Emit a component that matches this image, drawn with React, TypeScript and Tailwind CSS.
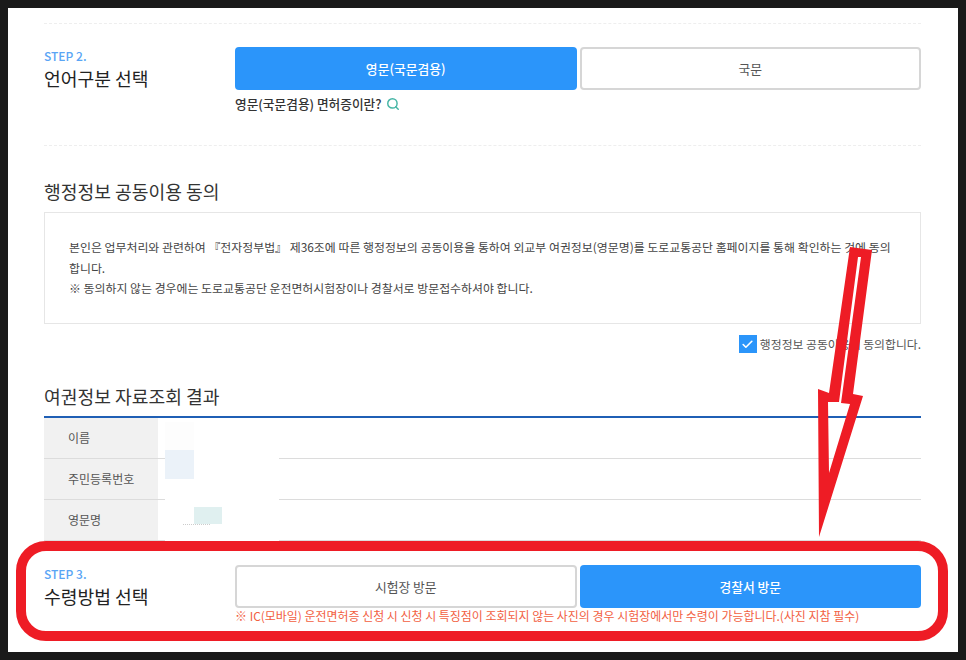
import { Check, Search } from 'lucide-react'

const font = { fontFamily: '"Noto Sans CJK KR", "Noto Sans", sans-serif' }

function StepRow({ step, title, left, right, leftOn }: { step: string; title: string; left: string; right: string; leftOn: boolean }) {
  const on = 'h-[43px] rounded-[4px] bg-[#2b95fa] text-white text-[12.8px] font-medium flex items-center justify-center'
  const off = 'h-[43px] rounded-[4px] border-2 border-[#d6d6d6] bg-white text-[#555] text-[12.8px] flex items-center justify-center'
  return (
    <div className="flex">
      <div className="w-[191px] pt-[2px]">
        <div className="text-[12px] leading-[14px] font-medium text-[#5aa5f5]">{step}</div>
        <div className="mt-[3px] text-[18.2px] leading-[24px] text-[#222]">{title}</div>
      </div>
      <div className="grid flex-1 grid-cols-2 gap-[3px]">
        <div className={leftOn ? on : off}>{left}</div>
        <div className={leftOn ? off : on}>{right}</div>
      </div>
    </div>
  )
}

function InfoRow({ label }: { label: string }) {
  return (
    <div className="flex h-[41px] border-b border-[#dcdcdc]">
      <div className="w-[114px] bg-[#f1f1f1] pl-[24px] flex items-center text-[12px] text-[#555]">{label}</div>
    </div>
  )
}

export default function App() {
  return (
    <div className="relative w-[966px] h-[660px] overflow-hidden bg-[#1a1a1a] p-[8px]" style={font}>
      <div className="h-[644px] bg-white pl-[36px] pr-[37px] pt-[15px]">
        <div className="border-t border-dashed border-[#eeeeee] pt-[23px] h-[122px]">
          <StepRow step="STEP 2." title="언어구분 선택" left="영문(국문겸용)" right="국문" leftOn />
          <div className="ml-[191px] mt-[5px] flex items-center gap-[4px] text-[12.7px] leading-[18px] font-medium text-[#333]">
            영문(국문겸용) 면허증이란?
            <Search size={14} strokeWidth={2.5} className="text-[#45b5a5]" />
          </div>
        </div>

        <div className="border-t border-dashed border-[#eeeeee] pt-[32px]">
          <div className="text-[18.2px] leading-[26px] text-[#333]">행정정보 공동이용 동의</div>
          <div className="mt-[8px] h-[112px] border border-[#e6e6e6] pl-[24px] pr-[24px] pt-[24px] text-[11.92px] leading-[20.5px] text-[#444]">
            본인은 업무처리와 관련하여 『전자정부법』 제36조에 따른 행정정보의 공동이용을 통하여 외교부 여권정보(영문명)를 도로교통공단 홈페이지를 통해 확인하는 것에 동의합니다.
            <br />※ 동의하지 않는 경우에는 도로교통공단 운전면허시험장이나 경찰서로 방문접수하셔야 합니다.
          </div>
          <div className="mt-[11px] flex items-center justify-end gap-[3px] text-[11.85px] leading-[18px] text-[#555]">
            <span className="flex h-[18px] w-[18px] items-center justify-center bg-[#2b95fa]">
              <Check size={13} strokeWidth={3} className="text-white" />
            </span>
            행정정보 공동이용에 동의합니다.
          </div>
        </div>

        <div className="mt-[30px] text-[18.2px] leading-[26px] text-[#333]">여권정보 자료조회 결과</div>
        <div className="mt-[7px] border-t-2 border-[#1f5fb5]">
          <InfoRow label="이름" />
          <InfoRow label="주민등록번호" />
          <InfoRow label="영문명" />
        </div>

        <div className="mt-[24px]">
          <StepRow step="STEP 3." title="수령방법 선택" left="시험장 방문" right="경찰서 방문" leftOn={false} />
          <div className="ml-[191px] mt-[1px] text-[11.96px] leading-[14px] text-[#f2603f]">
            ※ IC(모바일) 운전면허증 신청 시 신청 시 특징점이 조회되지 않는 사진의 경우 시험장에서만 수령이 가능합니다.(사진 지참 필수)
          </div>
        </div>
      </div>

      {/* 개인정보 가림 */}
      <div className="absolute left-[165px] top-[420px] h-[121px] w-[114px] bg-white" />
      <div className="absolute left-[165px] top-[422px] h-[28px] w-[29px] bg-[#fdfdfd]" />
      <div className="absolute left-[165px] top-[450px] h-[29px] w-[29px] bg-[#ebf2f9]" />
      <div className="absolute left-[194px] top-[507px] h-[17px] w-[28px] bg-[#e0f0f0]" />
      <div className="absolute left-[183px] top-[524px] w-[27px] border-t border-dotted border-[#cccccc]" />

      {/* 빨간 강조 표시 */}
      <div className="absolute left-[16px] top-[541px] h-[100px] w-[932px] rounded-[30px] border-[10px] border-[#ee1c25]" />
      <svg className="absolute left-0 top-0" width="966" height="660" viewBox="0 0 966 660" fill="none">
        <path
          fillRule="evenodd"
          fill="#ee1c25"
          d="M850 247 L872 250 L853 394 L863 396 L819 537 L818 389 L829 393 Z M858 257 L861 257 L841 403 L850 404 L829 473 L828 402 L839 402 Z"
        />
      </svg>
    </div>
  )
}
